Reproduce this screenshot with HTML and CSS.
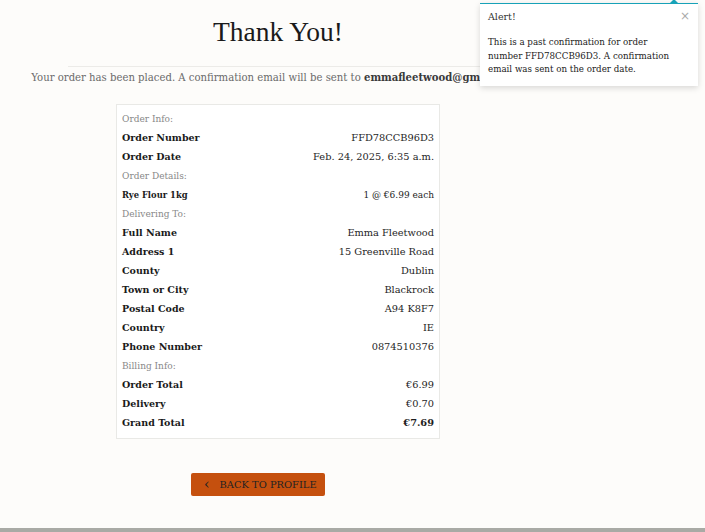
FILE: index.html
```html
<!DOCTYPE html>
<html lang="en">
<head>
<meta charset="utf-8">
<title>Thank You</title>
<link rel="stylesheet" href="styles.css">
</head>
<body>
<main class="page">
  <h1 class="title">Thank You!</h1>
  <hr class="rule">
  <div class="intro"><p>Your order has been placed. A confirmation email will be sent to <strong>emmafleetwood@gmail.com</strong>.</p></div>
  <div class="order">
    <div class="label">Order Info:</div>
    <div class="row"><span class="k">Order Number</span><span class="v">FFD78CCB96D3</span></div>
    <div class="row"><span class="k">Order Date</span><span class="v">Feb. 24, 2025, 6:35 a.m.</span></div>
    <div class="label">Order Details:</div>
    <div class="row small"><span class="k">Rye Flour 1kg</span><span class="v">1 @ €6.99 each</span></div>
    <div class="label">Delivering To:</div>
    <div class="row"><span class="k">Full Name</span><span class="v">Emma Fleetwood</span></div>
    <div class="row"><span class="k">Address 1</span><span class="v">15 Greenville Road</span></div>
    <div class="row"><span class="k">County</span><span class="v">Dublin</span></div>
    <div class="row"><span class="k">Town or City</span><span class="v">Blackrock</span></div>
    <div class="row"><span class="k">Postal Code</span><span class="v">A94 K8F7</span></div>
    <div class="row"><span class="k">Country</span><span class="v">IE</span></div>
    <div class="row"><span class="k">Phone Number</span><span class="v">0874510376</span></div>
    <div class="label">Billing Info:</div>
    <div class="row"><span class="k">Order Total</span><span class="v">€6.99</span></div>
    <div class="row"><span class="k">Delivery</span><span class="v">€0.70</span></div>
    <div class="row"><span class="k">Grand Total</span><span class="v strong">€7.69</span></div>
  </div>
  <div class="actions">
    <a class="btn" href="#"><span class="chev">&lsaquo;</span><span>BACK TO PROFILE</span></a>
  </div>
</main>
<div class="toast">
  <div class="toast-arrow"></div>
  <div class="toast-head"><span>Alert!</span><span class="close">&times;</span></div>
  <div class="toast-body">This is a past confirmation for order number FFD78CCB96D3. A confirmation email was sent on the order date.</div>
</div>
<footer class="foot"></footer>
</body>
</html>
```
FILE: styles.css
```css
html, body { margin: 0; padding: 0; }
body {
  background: #fdfcfa;
  font-family: "DejaVu Serif", serif;
  color: #1e1e1e;
  min-height: 100vh;
  display: flex;
  flex-direction: column;
}
.page {
  width: 420px;
  margin-left: 68px;
  display: flex;
  flex-direction: column;
  align-items: center;
}
.title {
  font-family: "Liberation Serif", serif;
  font-weight: 400;
  font-size: 27.5px;
  margin: 14px 0 0;
  line-height: 36px;
  color: #1a1a1a;
}
.rule {
  width: 100%;
  border: 0;
  border-top: 1px solid #ecebe8;
  margin: 16px 0 0;
}
.intro {
  width: 100%;
  display: flex;
  justify-content: center;
}
.intro p {
  white-space: nowrap;
  margin: 2px 0 0;
  font-size: 10.1px;
  line-height: 18px;
  color: #6a6a6a;
}
.intro strong { color: #3a3a3a; }
.order {
  width: 314px;
  margin-top: 17px;
  background: #fff;
  border: 1px solid #e9e9e6;
  padding: 4px 4px 6px;
  box-sizing: content-box;
}
.label, .row {
  height: 19px;
  display: flex;
  align-items: center;
  padding: 0 1px;
}
.label {
  font-size: 9px;
  color: #888;
}
.row {
  justify-content: space-between;
  font-size: 9.8px;
}
.k { font-weight: bold; color: #1a1a1a; font-size: 9.5px; }
.v { color: #1e1e1e; }
.v.strong { font-weight: bold; }
.row.small { font-size: 9px; }
.row.small .k { font-size: 8.4px; }
.actions {
  width: 100%;
  box-sizing: border-box;
  margin-top: 34px;
  padding-left: 123px;
  display: flex;
  justify-content: flex-start;
}
.btn {
  display: flex;
  align-items: center;
  gap: 10px;
  height: 23px;
  padding: 0 8px 0 13px;
  background: #c5500e;
  border-radius: 2px;
  color: #222;
  text-decoration: none;
  font-size: 9.9px;
}
.chev { font-size: 14px; line-height: 1; margin-top: -2px; }
.toast {
  position: absolute;
  top: 3px;
  left: 480px;
  width: 218px;
  background: #fff;
  border-top: 1px solid #17a2b8;
  box-shadow: 0 2px 6px rgba(0,0,0,0.15);
}
.toast-arrow {
  position: absolute;
  top: -5px;
  right: 20px;
  width: 0; height: 0;
  border-left: 4px solid transparent;
  border-right: 4px solid transparent;
  border-bottom: 4px solid #17a2b8;
}
.toast-head {
  display: flex;
  justify-content: space-between;
  align-items: center;
  padding: 2px 8px 0;
  height: 20px;
  font-size: 9.5px;
  color: #333;
}
.close { color: #aaa; font-size: 12px; font-family: "DejaVu Sans", sans-serif; }
.toast-body {
  padding: 10px 22px 9px 8px;
  font-size: 8.7px;
  line-height: 13.5px;
  color: #222;
}
.foot {
  margin-top: auto;
  height: 4px;
  background: #a9aaa5;
}
```
